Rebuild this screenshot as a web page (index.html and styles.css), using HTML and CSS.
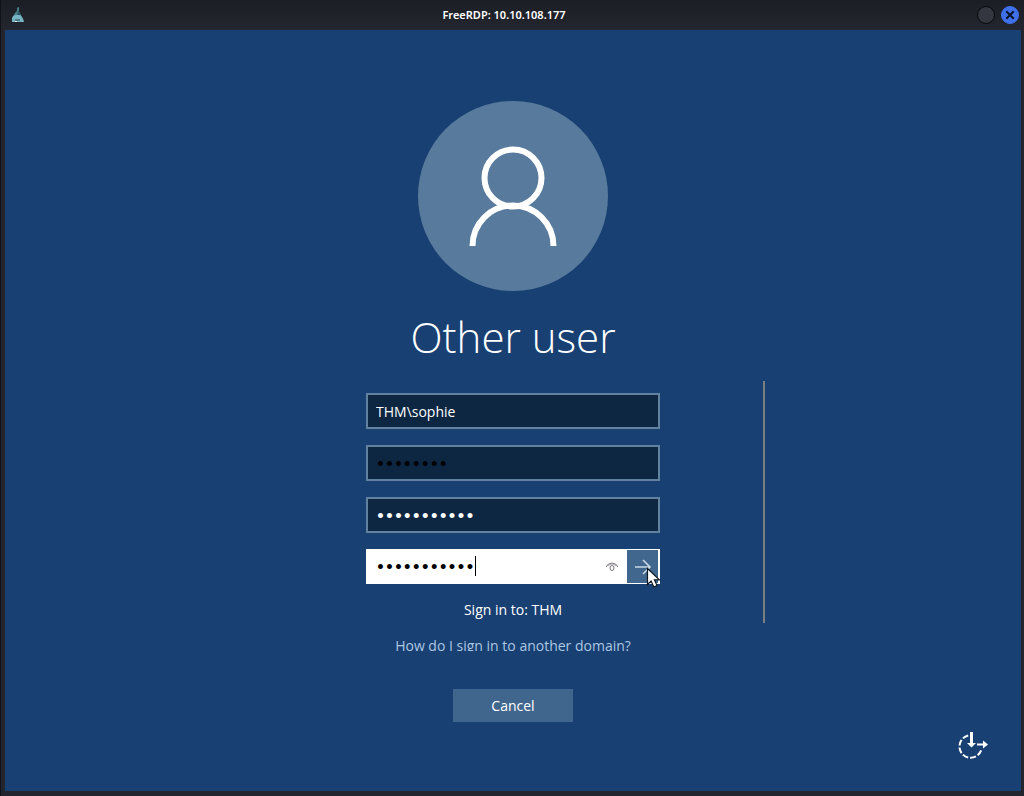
FILE: index.html
```html
<!DOCTYPE html>
<html lang="en">
<head>
<meta charset="utf-8">
<title>FreeRDP: 10.10.108.177</title>
<link rel="stylesheet" href="styles.css">
</head>
<body>
<div class="window">
  <header class="titlebar">
    <svg class="app-icon" width="14" height="18" viewBox="0 0 14 18" aria-hidden="true">
      <path d="M6 2q1-1 2-1v5q2 2 3 6H2q1-5 4-7z" fill="#4a7d8c"/>
      <path d="M7 5l2 1 1 5H6z" fill="#2c5562"/>
      <path d="M1 16v-4q1-3 4-3h4q3 2 4 7z" fill="#77b3c2"/>
      <path d="M4 13h5v2H4z" fill="#4b7c8a"/>
      <path d="M4 15h2v1H4z" fill="#fff"/>
    </svg>
    <h1 class="window-title">FreeRDP: 10.10.108.177</h1>
    <div class="window-controls">
      <button class="control" type="button" aria-label="Minimize"></button>
      <button class="control control-close" type="button" aria-label="Close">
        <svg width="10" height="10" viewBox="0 0 10 10" aria-hidden="true"><path d="M2 2l6 6M8 2L2 8" stroke="#0b1226" stroke-width="2" fill="none" stroke-linecap="square"/></svg>
      </button>
    </div>
  </header>
  <main class="screen">
    <form class="login">
      <div class="identity">
        <svg class="avatar" width="190" height="190" viewBox="0 0 190 190" aria-hidden="true">
          <circle cx="95" cy="95" r="95" fill="#587a9c"/>
          <g fill="none" stroke="#fff" stroke-width="6">
            <circle cx="95" cy="77" r="28.500"/>
            <path d="M54.500 145a40.500 40.500 0 0 1 81 0"/>
          </g>
        </svg>
        <h2 class="user-name">Other user</h2>
      </div>
      <div class="credentials">
        <input class="field" type="text" value="THM\sophie" aria-label="User name" spellcheck="false">
        <input class="field field-secret field-old" type="password" value="12345678" aria-label="Password">
        <input class="field field-secret" type="password" value="12345678901" aria-label="New password">
        <div class="confirm">
          <input class="field-secret confirm-input" type="password" value="12345678901" aria-label="Confirm password">
          <span class="caret"></span>
          <button class="reveal" type="button" aria-label="Show password">
            <svg width="14" height="12" viewBox="0 0 14 12" fill="none" stroke="#77747c" aria-hidden="true"><path d="M1 6q2-4 6-4t6 4"/><path d="M3 5q2-2 4-2t4 2" stroke="#aaa7ae"/><ellipse cx="7" cy="7" rx="2" ry="2.500"/></svg>
          </button>
          <button class="submit" type="submit" aria-label="Submit">
            <svg width="18" height="16" viewBox="0 0 18 16" fill="none" stroke="#c9d8e3" stroke-width="1.600" aria-hidden="true"><path d="M1 8h15M9 1l7 7-7 7"/></svg>
          </button>
          <svg class="pointer" width="16" height="22" viewBox="0 0 16 22" aria-hidden="true"><path d="M1.500 1.500v16l3.600-3.500 2.700 6 3.200-1.400-2.600-5.800h5z" fill="#fff" stroke="#101923" stroke-width="1.200"/></svg>
        </div>
        <p class="domain">Sign in to: THM</p>
      </div>
      <div class="divider"></div>
      <div class="actions">
        <a class="help" href="#">How do I sign in to another domain?</a>
        <button class="cancel" type="button">Cancel</button>
      </div>
    </form>
    <footer class="tools">
      <button class="ease" type="button" aria-label="Ease of access">
        <svg width="32" height="30" viewBox="0 0 32 30" aria-hidden="true">
          <path d="M12 4.500a11.200 11.200 0 1 0 12.500 14" transform="rotate(-4 13 16)" fill="none" stroke="#fff" stroke-width="2" stroke-dasharray="6 2"/>
          <path d="M14.500 1v11" stroke="#fff" stroke-width="3"/>
          <path d="M10 12h9l-4.500 4.500z" fill="#fff"/>
          <path d="M20 13.500h7" stroke="#fff" stroke-width="2"/>
          <path d="M26 9.500l5 4-5 4z" fill="#fff"/>
        </svg>
      </button>
    </footer>
  </main>
</div>
</body>
</html>
```
FILE: styles.css
```css
* {
  box-sizing: border-box;
}

body {
  margin: 0;
  background: #23252e;
  font-family: "Open Sans", "Noto Sans", sans-serif;
  font-size: 14px;
  color: #fff;
}

button {
  padding: 0;
  border: 0;
  background: none;
  color: inherit;
  font: inherit;
}

.window {
  display: flex;
  flex-direction: column;
  min-height: 100vh;
  padding: 0 3px 5px 4px;
  border-left: 1px solid #101218;
}

.titlebar {
  display: grid;
  grid-template-columns: 1fr auto 1fr;
  align-items: center;
  height: 30px;
  margin: 0 -3px 0 -4px;
  padding: 0 5px 0 10px;
  background: linear-gradient(#1c1e25, #24262f);
}

.window-title {
  margin: 0;
  padding-right: 22px;
  font-family: "Noto Sans", "Open Sans", sans-serif;
  font-size: 11px;
  font-weight: 600;
  line-height: 30px;
}

.window-controls {
  display: flex;
  justify-content: flex-end;
  gap: 6px;
}

.control {
  display: grid;
  place-items: center;
  width: 18px;
  height: 18px;
  border: 1px solid #08090c;
  border-radius: 50%;
  background: #343640;
}

.control-close {
  border-color: #3f70ec;
  background: #3f70ec;
}

.screen {
  display: flex;
  flex: 1;
  flex-direction: column;
  padding-top: 71px;
  background: #184072;
}

.login {
  display: grid;
  grid-template-columns: 1fr 294px 1fr;
}

.identity,
.credentials,
.actions {
  display: flex;
  flex-direction: column;
  grid-column: 2;
}

.identity {
  align-items: center;
}

.user-name {
  margin: 12px 0 10px;
  font-size: 42px;
  font-weight: 300;
  line-height: 68px;
  white-space: nowrap;
}

.credentials {
  gap: 16px;
  padding: 12px 0 3px;
}

.field {
  width: 100%;
  height: 36px;
  padding: 0 8px;
  border: 2px solid #61819e;
  outline: 0;
  background: #0d2743;
  color: #fff;
  font: inherit;
}

.field-secret {
  padding-top: 2px;
  font-family: "DejaVu Sans", sans-serif;
  font-size: 14px;
  font-weight: 700;
}

.field-old {
  color: #000;
}

.confirm {
  position: relative;
  display: flex;
  height: 35px;
  padding: 1px 2px 1px 0;
  background: #fff;
}

.confirm-input {
  flex: 1;
  min-width: 0;
  border: 0;
  padding-left: 10px;
  outline: 0;
  background: none;
  color: #000;
}

.caret {
  position: absolute;
  left: 109px;
  top: 7px;
  width: 1px;
  height: 20px;
  background: #000;
}

.reveal {
  display: grid;
  place-items: center;
  width: 30px;
}

.submit {
  display: grid;
  place-items: center;
  width: 31px;
  background: #41678e;
}

.pointer {
  position: absolute;
  right: -2px;
  top: 18px;
}

.domain {
  margin: 0;
  line-height: 20px;
  text-align: center;
}

.divider {
  grid-column: 3;
  grid-row: 2;
  width: 2px;
  margin-left: 103px;
  background: #7b7f80;
}

.actions {
  align-items: center;
  gap: 38px;
  padding-top: 13px;
}

.help {
  height: 15px;
  overflow: hidden;
  color: #adc6e2;
  line-height: 20px;
  text-decoration: none;
  white-space: nowrap;
}

.cancel {
  width: 120px;
  height: 33px;
  background: #41668d;
}

.tools {
  display: flex;
  justify-content: flex-end;
  margin-top: auto;
  padding: 0 32px 30px;
}

.ease svg {
  display: block;
}
```
